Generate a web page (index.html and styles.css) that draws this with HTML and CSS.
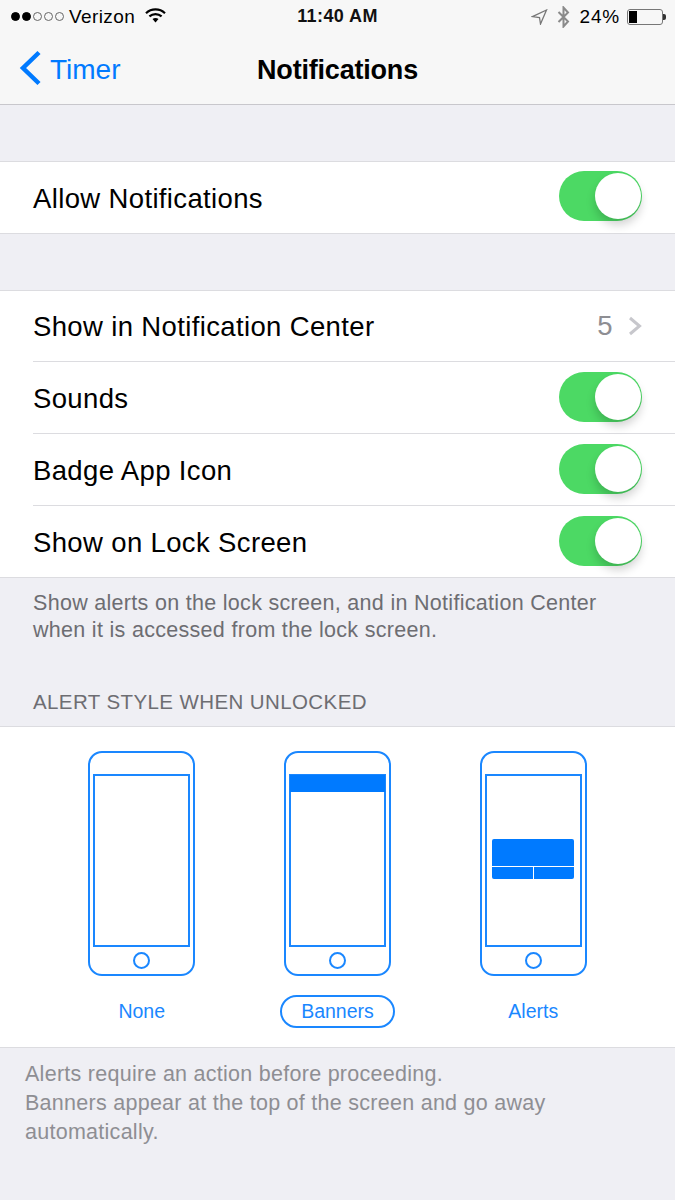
FILE: index.html
```html
<!DOCTYPE html>
<html lang="en">
<head>
<meta charset="utf-8">
<title>Notifications</title>
<link rel="stylesheet" href="styles.css">
</head>
<body>
<div class="page">
  <header class="topbar">
    <div class="status">
      <div class="status-left">
        <span class="signal"><i class="dot on"></i><i class="dot on"></i><i class="dot"></i><i class="dot"></i><i class="dot"></i></span>
        <span class="carrier">Verizon</span>
        <svg class="wifi" width="21" height="15" viewBox="0 0 21 15"><path d="M1 5.2C6.4.2 14.6.2 20 5.2" class="wf"/><path d="M4.4 8.4c3.5-3.1 8.7-3.1 12.2 0" class="wf"/><path d="M10.5 14.5l-3-3.4c1.8-1.4 4.2-1.4 6 0z" class="wb"/></svg>
      </div>
      <div class="clock">11:40 AM</div>
      <div class="status-right">
        <svg class="loc" width="17" height="16" viewBox="0 0 17 16"><path d="M15.500 1L1.500 7.600l7 .9 1 6.500z"/></svg>
        <svg class="bt" width="13" height="22" viewBox="0 0 13 22"><path d="M1.500 6l9.500 9.500L6.500 20.500V1.500L11 6.500 1.500 16"/></svg>
        <span class="pct">24%</span>
        <span class="battery"><span class="charge"></span></span><span class="nub"></span>
      </div>
    </div>
    <nav class="nav">
      <div class="back">
        <svg class="chev" width="23" height="36" viewBox="0 0 23 36"><path d="M20 2.500L4 18l16 15.500"/></svg>
        <span>Timer</span>
      </div>
      <h1 class="title">Notifications</h1>
    </nav>
  </header>

  <section class="group first">
    <div class="cell"><span>Allow Notifications</span><span class="switch"></span></div>
  </section>

  <section class="group second">
    <div class="cell"><span>Show in Notification Center</span><span class="detail">5<svg class="disc" width="14" height="20" viewBox="0 0 14 20"><path d="M2 2l9.500 8L2 18"/></svg></span></div>
    <div class="cell"><span>Sounds</span><span class="switch"></span></div>
    <div class="cell"><span>Badge App Icon</span><span class="switch"></span></div>
    <div class="cell"><span>Show on Lock Screen</span><span class="switch"></span></div>
  </section>

  <p class="note">Show alerts on the lock screen, and in Notification Center when it is accessed from the lock screen.</p>
  <h2 class="caption">ALERT STYLE WHEN UNLOCKED</h2>

  <section class="styles">
    <div class="option">
      <div class="phone"><div class="screen"></div><div class="home"></div></div>
      <span class="label">None</span>
    </div>
    <div class="option">
      <div class="phone"><div class="screen"><div class="banner"></div></div><div class="home"></div></div>
      <span class="label selected">Banners</span>
    </div>
    <div class="option">
      <div class="phone"><div class="screen mid"><div class="alert"><div class="alert-body"></div><div class="alert-btns"><i></i><i></i></div></div></div><div class="home"></div></div>
      <span class="label">Alerts</span>
    </div>
  </section>

  <p class="foot">Alerts require an action before proceeding.<br>Banners appear at the top of the screen and go away automatically.</p>
</div>
</body>
</html>
```
FILE: styles.css
```css
* { box-sizing: border-box; }
html, body { margin: 0; padding: 0; }
body { background: #efeff4; font-family: "Liberation Sans", Arial, sans-serif; color: #000; }
.page { width: 675px; height: 1200px; overflow: hidden; background: #efeff4; }

.topbar { height: 105px; background: #f7f7f7; border-bottom: 1px solid #c8c7cc; }
.status { position: relative; height: 33px; display: flex; justify-content: space-between; align-items: center; padding: 0 9px 0 11px; font-size: 19px; }
.status-left, .status-right { display: flex; align-items: center; }
.signal { display: flex; gap: 2px; margin-right: 5px; }
.dot { width: 9px; height: 9px; border-radius: 50%; border: 1px solid #666; display: block; }
.dot.on { background: #000; border-color: #000; }
.carrier { letter-spacing: .4px; }
.wifi { margin-left: 10px; margin-top: -2px; }
.wf { fill: none; stroke: #000; stroke-width: 2.200; }
.wb { fill: #000; }
.clock { position: absolute; left: 0; right: 0; text-align: center; font-weight: 700; font-size: 18px; letter-spacing: .4px; color: #111; }
.loc path { fill: none; stroke: #777; stroke-width: 1.300; }
.bt { margin-left: 9px; }
.bt path { fill: none; stroke: #8a8a8a; stroke-width: 2; }
.pct { margin-left: 10px; letter-spacing: .8px; }
.battery { width: 36px; height: 16px; margin-left: 7px; border: 1px solid #777; border-radius: 3px; padding: 1px; display: block; }
.charge { display: block; width: 8px; height: 100%; background: #000; }
.nub { width: 3px; height: 6px; background: #333; border-radius: 0 2px 2px 0; }

.nav { position: relative; height: 71px; display: flex; align-items: center; justify-content: center; padding-top: 4px; }
.back { position: absolute; left: 19px; top: 17px; display: flex; align-items: center; color: #007aff; font-size: 28px; gap: 8px; }
.back span { padding-top: 4px; }
.chev path { fill: none; stroke: #007aff; stroke-width: 4.500; }
.title { margin: 0; font-size: 27px; font-weight: 700; letter-spacing: -.2px; }

.group { background: #fff; border-top: 1px solid #dcdce0; border-bottom: 1px solid #dcdce0; }
.first { margin-top: 56px; }
.first .cell { height: 71px; }
.second { margin-top: 56px; }
.cell { height: 72px; margin-left: 33px; padding-right: 33px; display: flex; justify-content: space-between; align-items: center; font-size: 27.500px; letter-spacing: .36px; border-top: 1px solid #dcdce0; }
.cell:first-child { border-top: 0; }
.cell > span:first-child { padding-top: 2px; }
.second .cell:first-child { height: 70px; }

.switch { position: relative; width: 83px; height: 50px; margin-bottom: 1px; border-radius: 25px; background: #4cd964; display: block; }
.first .switch { margin-bottom: 3px; }
.switch::after { content: ""; position: absolute; right: 1px; top: 2px; width: 46px; height: 46px; border-radius: 50%; background: #fff; box-shadow: 0 6px 10px rgba(0,0,0,.18); }

.detail { display: flex; align-items: center; gap: 15px; color: #8e8e93; }
.disc path { fill: none; stroke: #c7c7cc; stroke-width: 3; }

.note { margin: 12px 33px 0; font-size: 21.500px; letter-spacing: .3px; line-height: 27px; color: #6d6d72; }
.caption { margin: 45px 33px 0; font-size: 20.500px; letter-spacing: .4px; line-height: 25px; font-weight: 400; color: #6d6d72; }

.styles { margin-top: 12px; height: 322px; background: #fff; border-top: 1px solid #dcdce0; border-bottom: 1px solid #dcdce0; display: flex; justify-content: center; gap: 79.750px; padding-top: 24px; }
.option { width: 116px; display: flex; flex-direction: column; align-items: center; }
.phone { width: 107px; height: 225px; border: 2px solid #1a87ff; border-radius: 14px; padding: 21px 3px 0; display: flex; flex-direction: column; align-items: center; }
.screen { width: 97px; height: 173px; border: 2px solid #1a87ff; flex: none; }
.screen.mid { display: flex; align-items: center; justify-content: center; }
.banner { height: 17px; margin: -1px -1px 0; background: #007aff; }
.home { width: 17px; height: 17px; margin-top: 5px; border: 2px solid #1a87ff; border-radius: 50%; flex: none; }
.alert { width: 82px; height: 40px; margin-bottom: 4px; flex: none; border-radius: 2px; overflow: hidden; display: flex; flex-direction: column; gap: 1px; }
.alert-body { height: 27px; background: #007aff; }
.alert-btns { flex: 1; display: flex; gap: 1px; }
.alert-btns i { flex: 1; background: #007aff; }
.label { margin-top: 19px; height: 33px; display: flex; align-items: center; justify-content: center; padding: 0 19px; font-size: 19.500px; color: #1a87ff; border: 2px solid transparent; border-radius: 17px; }
.label.selected { border-color: #1a87ff; }

.foot { margin: 12px 25px 0; font-size: 21.500px; letter-spacing: .27px; line-height: 29px; color: #8e8e93; }
```
